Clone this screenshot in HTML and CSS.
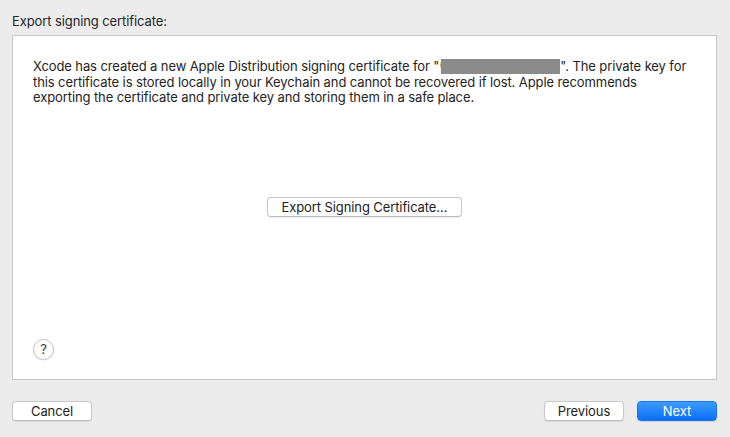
FILE: index.html
```html
<!DOCTYPE html>
<html>
<head>
<meta charset="utf-8">
<link rel="stylesheet" href="styles.css">
</head>
<body>
<div class="sheet">
  <div class="title">Export signing certificate:</div>
  <div class="panel">
    <p class="message">Xcode has created a new Apple Distribution signing certificate for "<span class="redact-wrap"><span class="hidden-char">(</span><span class="redact"></span></span>". The private key for<br>this certificate is stored locally in your Keychain and cannot be recovered if lost. Apple recommends<br>exporting the certificate and private key and storing them in a safe place.</p>
    <div class="center-row">
      <button class="btn btn-export">Export Signing Certificate…</button>
    </div>
    <div class="help-row">
      <button class="help">?</button>
    </div>
  </div>
  <div class="footer">
    <button class="btn btn-footer">Cancel</button>
    <div class="spacer"></div>
    <button class="btn btn-footer">Previous</button>
    <button class="btn btn-footer btn-primary">Next</button>
  </div>
</div>
</body>
</html>
```
FILE: styles.css
```css
html, body {
  margin: 0;
  padding: 0;
  background: #ececec;
}
body {
  font-family: Inter, "Liberation Sans", Arial, sans-serif;
  font-size: 13px;
  letter-spacing: -0.1px;
  color: #222;
  width: 730px;
  height: 437px;
  overflow: hidden;
}
.sheet {
  padding: 0 13px 0 12px;
  display: flex;
  flex-direction: column;
}
.title {
  margin-top: 13px;
  height: 16px;
  line-height: 17px;
  color: #262626;
}
.panel {
  margin-top: 6px;
  height: 343px;
  background: #fff;
  border: 1px solid #c6c6c6;
  display: flex;
  flex-direction: column;
  padding: 0 20px 0 20px;
}
.message {
  margin: 23px 0 0 0;
  line-height: 15.5px;
  color: #242424;
  white-space: nowrap;
}
.redact-wrap {
  position: relative;
  display: inline-block;
  width: 121px;
  height: 15px;
  vertical-align: -3px;
}
.hidden-char {
  position: absolute;
  left: 0;
  top: -2px;
}
.redact {
  position: absolute;
  left: 2px;
  top: 0;
  width: 119px;
  height: 15px;
  background: #8b8b8b;
}
.center-row {
  margin-top: 91px;
  display: flex;
  justify-content: center;
}
.btn {
  font-family: Inter, "Liberation Sans", Arial, sans-serif;
  font-size: 13px;
  letter-spacing: -0.1px;
  color: #222;
  background: #fff;
  border: 1px solid #c9c9c9;
  border-bottom-color: #bdbdbd;
  border-radius: 4px;
  box-shadow: 0 0.5px 1px rgba(0,0,0,0.08);
  height: 20px;
  padding: 0;
  line-height: 18px;
  margin: 0;
}
.btn-export {
  width: 195px;
}
.help-row {
  margin-top: auto;
  margin-bottom: 19px;
  display: flex;
}
.help {
  width: 21px;
  height: 21px;
  border-radius: 50%;
  background: #fff;
  border: 1px solid #c4c4c4;
  box-shadow: 0 0.5px 1px rgba(0,0,0,0.1);
  font-family: Inter, "Liberation Sans", Arial, sans-serif;
  font-size: 13px;
  color: #333;
  padding: 0;
  line-height: 19px;
  text-align: center;
}
.footer {
  margin-top: 21px;
  display: flex;
  gap: 13px;
}
.spacer {
  flex: 1;
}
.btn-footer {
  width: 80px;
  height: 20px;
}
.btn-primary {
  color: #fff;
  border: 1px solid #1675f0;
  background: linear-gradient(#3c9cfd, #0a6ff8);
  box-shadow: 0 0.5px 1px rgba(0,0,0,0.12);
}
```
